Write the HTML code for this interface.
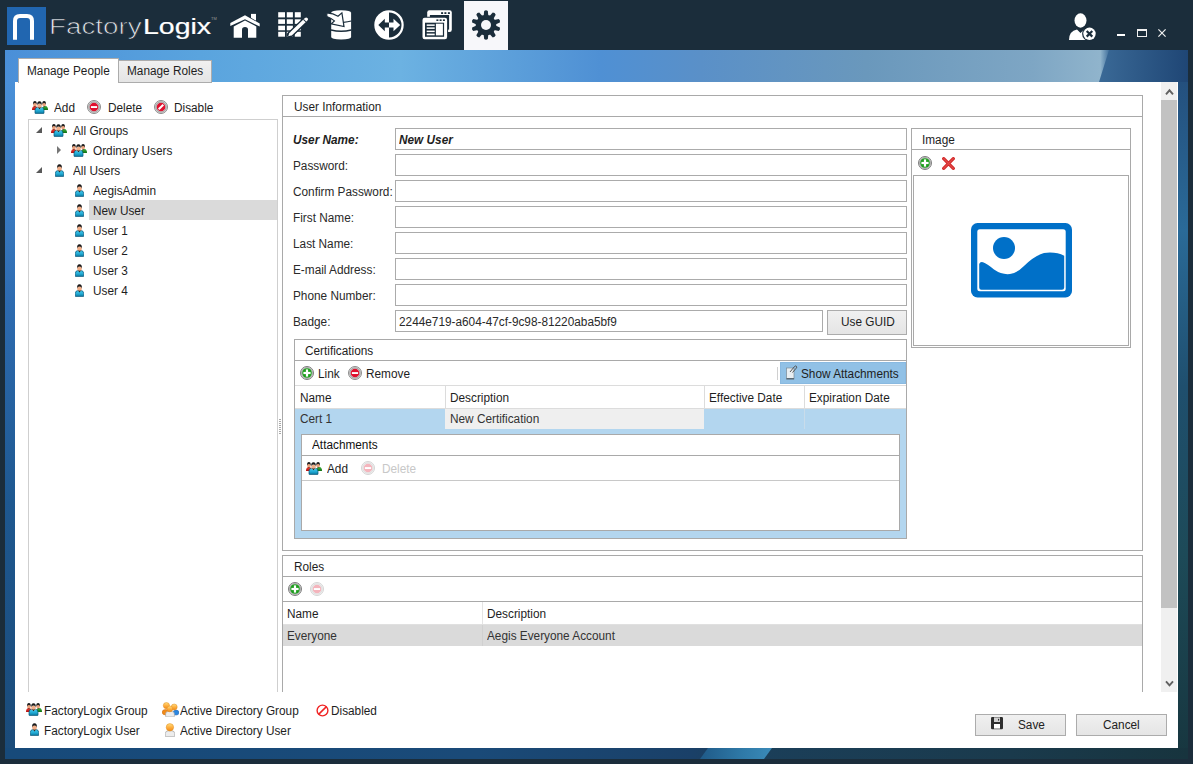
<!DOCTYPE html><html><head><meta charset="utf-8"><style>
*{margin:0;padding:0;box-sizing:border-box}
html,body{width:1193px;height:764px;overflow:hidden}
body{position:relative;background:#1b2d3b;font-family:"Liberation Sans",sans-serif;}
.a{position:absolute}
.t{position:absolute;font-size:12.3px;line-height:14px;white-space:nowrap;color:#1e1e1e;transform:scaleX(0.96);transform-origin:0 0}
.bi{font-weight:bold;font-style:italic}
</style></head><body>

<svg width="0" height="0" style="position:absolute"><defs>
<linearGradient id="gteal" x1="0" y1="0" x2="0" y2="1"><stop offset="0" stop-color="#48cdf2"/><stop offset=".6" stop-color="#1ea6d0"/><stop offset="1" stop-color="#0a6f95"/></linearGradient>
<linearGradient id="gred" x1="0" y1="0" x2="0" y2="1"><stop offset="0" stop-color="#f04030"/><stop offset="1" stop-color="#b01010"/></linearGradient>
<linearGradient id="ggreen" x1="0" y1="0" x2="0" y2="1"><stop offset="0" stop-color="#40b040"/><stop offset="1" stop-color="#107010"/></linearGradient>
<linearGradient id="gorange" x1="0" y1="0" x2="0" y2="1"><stop offset="0" stop-color="#ffe080"/><stop offset=".5" stop-color="#ffb040"/><stop offset="1" stop-color="#f08a18"/></linearGradient>
<symbol id="grp" viewBox="0 0 16 13">
 <path d="M0 9 Q0 5.3 2.5 5 H3.5 Q5.8 5.3 5.8 8 V9Z" fill="url(#gred)"/>
 <path d="M10.2 8 Q10.3 5.3 12.5 5 H13.5 Q16 5.3 16 9 H10.2Z" fill="url(#ggreen)"/>
 <ellipse cx="2.9" cy="3.5" rx="1.8" ry="2" fill="#eba27c"/>
 <path d="M1 3.4 Q0.9 0 2.9 0 Q4.9 0 4.8 3.4 Q4.4 1.8 2.9 1.9 Q1.4 1.8 1 3.4Z" fill="#1e1e1e"/>
 <ellipse cx="12.1" cy="3.5" rx="1.8" ry="2" fill="#eba27c"/>
 <path d="M10.2 3.4 Q10.1 0 12.1 0 Q14.1 0 14 3.4 Q13.6 1.8 12.1 1.9 Q10.6 1.8 10.2 3.4Z" fill="#1e1e1e"/>
 <path d="M2.2 5 L2.9 6 L3.6 5Z" fill="#222"/><path d="M11.4 5 L12.1 6 L12.8 5Z" fill="#222"/>
 <path d="M3 12 V9.2 Q3 6.5 5.5 6.2 H9.5 Q12 6.5 12 9.2 V12 Q12 12.6 11.3 12.6 H3.7 Q3 12.6 3 12Z" fill="url(#gteal)" stroke="#07587a" stroke-width=".7"/>
 <ellipse cx="7.5" cy="4.9" rx="2.2" ry="2.5" fill="#f0ae88"/>
 <path d="M5.2 4.6 Q4.9 0.3 7.5 0.3 Q10.1 0.3 9.8 4.6 Q9.4 2.4 7.5 2.5 Q5.6 2.4 5.2 4.6Z" fill="#1a1a1a"/>
 <path d="M6.1 6.2 L7.5 8.3 L8.9 6.2Z" fill="#151515"/><path d="M6.9 6.2 L7.5 7.3 L8.1 6.2Z" fill="#e9a880"/>
</symbol>
<symbol id="usr" viewBox="0 0 9 13">
 <path d="M0.3 12 V9.4 Q0.3 6.8 3 6.5 H6 Q8.7 6.8 8.7 9.4 V12 Q8.7 12.6 8 12.6 H1 Q0.3 12.6 0.3 12Z" fill="url(#gteal)" stroke="#07587a" stroke-width=".7"/>
 <ellipse cx="4.5" cy="4.6" rx="2.3" ry="2.7" fill="#f0ae88"/>
 <path d="M2.1 4.6 Q1.8 0.3 4.5 0.3 Q7.2 0.3 6.9 4.6 Q6.5 2.5 4.5 2.6 Q2.5 2.5 2.1 4.6Z" fill="#1a1a1a"/>
 <path d="M3.1 6.5 L4.5 8.6 L5.9 6.5Z" fill="#151515"/><path d="M3.9 6.5 L4.5 7.6 L5.1 6.5Z" fill="#e9a880"/>
</symbol>
<symbol id="del" viewBox="0 0 14 14">
 <circle cx="7" cy="7" r="6.5" fill="#dcdcdc" stroke="#8c8c8c" stroke-width="1"/>
 <circle cx="7" cy="7" r="5.1" fill="none" stroke="#9a9a9a" stroke-width=".9"/>
 <circle cx="7" cy="7" r="4.3" fill="#e0102e"/>
 <rect x="3.9" y="6.1" width="6.2" height="1.9" fill="#fff"/>
</symbol>
<symbol id="deld" viewBox="0 0 14 14">
 <circle cx="7" cy="7" r="6.5" fill="#f2f2f2" stroke="#d4d4d4" stroke-width="1"/>
 <circle cx="7" cy="7" r="5.1" fill="none" stroke="#dadada" stroke-width=".9"/>
 <circle cx="7" cy="7" r="4.3" fill="#f4b4bc"/>
 <rect x="3.9" y="6.1" width="6.2" height="1.9" fill="#fff"/>
</symbol>
<symbol id="dis" viewBox="0 0 14 14">
 <circle cx="7" cy="7" r="6.5" fill="#dcdcdc" stroke="#8c8c8c" stroke-width="1"/>
 <circle cx="7" cy="7" r="5.1" fill="none" stroke="#9a9a9a" stroke-width=".9"/>
 <circle cx="7" cy="7" r="4.3" fill="#e0102e"/>
 <path d="M4 8.6 L8.6 4 L10 5.4 L5.4 10Z" fill="#fff"/>
</symbol>
<symbol id="plus" viewBox="0 0 14 14">
 <circle cx="7" cy="7" r="6.5" fill="#e4e4e4" stroke="#7c7c7c" stroke-width="1"/>
 <circle cx="7" cy="7" r="5.4" fill="none" stroke="#8c8c8c" stroke-width=".7"/>
 <circle cx="7" cy="7" r="4.8" fill="#1c9e1c"/>
 <rect x="3.4" y="5.9" width="7.2" height="2.2" fill="#fff"/><rect x="5.9" y="3.4" width="2.2" height="7.2" fill="#fff"/>
</symbol>
<symbol id="redx" viewBox="0 0 13 13">
 <path d="M1.7 1.7 L11.3 11.3 M11.3 1.7 L1.7 11.3" stroke="#d42a2a" stroke-width="3.3" stroke-linecap="round"/>
 <path d="M1.7 1.7 L11.3 11.3 M11.3 1.7 L1.7 11.3" stroke="#ec6060" stroke-width="1.1" stroke-linecap="round" opacity=".6"/>
</symbol>
<symbol id="nodis" viewBox="0 0 13 13">
 <circle cx="6.5" cy="6.5" r="5.4" fill="none" stroke="#f02424" stroke-width="1.4"/>
 <path d="M2.6 10.4 L10.4 2.6" stroke="#f02424" stroke-width="1.5"/>
</symbol>
<symbol id="adgrp" viewBox="0 0 17 15">
 <ellipse cx="3.5" cy="10.2" rx="3.3" ry="2.7" fill="#f08a18" stroke="#c86a10" stroke-width=".5"/>
 <ellipse cx="14" cy="10.6" rx="2.9" ry="2.5" fill="#2a86e0" stroke="#1a60b0" stroke-width=".5"/>
 <circle cx="4.4" cy="3.6" r="3.1" fill="url(#gorange)" stroke="#e08a20" stroke-width=".5"/>
 <circle cx="12.2" cy="5" r="3" fill="url(#gorange)" stroke="#e08a20" stroke-width=".5"/>
 <path d="M3.6 14.2 V12 Q3.6 9.5 6.5 9.3 H9.5 Q12.4 9.5 12.4 12 V14.2 Q12.4 15 11.5 15 H4.5 Q3.6 15 3.6 14.2Z" fill="#ececec" stroke="#9a9a9a" stroke-width=".6"/>
 <circle cx="7.8" cy="6.9" r="2.9" fill="url(#gorange)" stroke="#e08a20" stroke-width=".5"/>
</symbol>
<symbol id="adusr" viewBox="0 0 10 14">
 <path d="M0.3 13 V10.5 Q0.3 8 3 7.8 H7 Q9.7 8 9.7 10.5 V13 Q9.7 13.7 9 13.7 H1 Q0.3 13.7 0.3 13Z" fill="#ececec" stroke="#9a9a9a" stroke-width=".6"/>
 <circle cx="4.9" cy="4.3" r="3.7" fill="url(#gorange)" stroke="#e08a20" stroke-width=".5"/>
</symbol>
<symbol id="save" viewBox="0 0 12 12.5">
 <rect x="0" y="0" width="12" height="12.4" rx="1.3" fill="#2e2e2e"/>
 <rect x="3" y="0.4" width="6" height="4.6" fill="#d0d0d0"/><ellipse cx="7.6" cy="2.8" rx=".6" ry="1" fill="#222"/>
 <rect x="3" y="7" width="6" height="4.6" fill="#fff"/>
</symbol>
<symbol id="attach" viewBox="0 0 12 16">
 <rect x="0.5" y="3" width="7.5" height="11" fill="#e8eef2" stroke="#7a8a96" stroke-width=".7"/>
 <rect x="0.5" y="13" width="7.5" height="1.4" fill="#5a6a76"/>
 <path d="M4 7 L8.5 1.5 Q9.5 0.5 10.4 1.3 Q11.2 2.1 10.3 3.1 L6.5 7.5" fill="none" stroke="#555" stroke-width="1"/>
</symbol>
</defs></svg>

<div class="a" style="left:5px;top:50px;width:1183px;height:709px;background:linear-gradient(90deg,#4a8fd8 0%,#5aa4de 16.5%,#6cb2e2 33.4%,#4f90d4 50.3%,#5a90c8 58.8%,#6a98bc 72.8%,#7ea6c4 86.9%,#90b4cc 92.6%,#3a6a98 93.4%,#1f4675 100%)"></div>
<div class="a" style="left:1090px;top:50px;width:98px;height:32px;clip-path:polygon(19px 0,98px 0,98px 32px,9px 32px);background:linear-gradient(90deg,#3d6d9a,#1f4675)"></div>
<div class="a" style="left:1178px;top:82px;width:10px;height:677px;background:linear-gradient(180deg,#24507e 0%,#2a6a98 22%,#1f4f6e 45%,#1d4a58 70%,#17363f 100%)"></div>
<div class="a" style="left:5px;top:82px;width:10px;height:677px;background:linear-gradient(180deg,#4a90d8 0%,#2d6bb0 33%,#1e5890 62%,#1a4a78 100%)"></div>
<div class="a" style="left:5px;top:748px;width:1183px;height:11px;background:linear-gradient(90deg,#174a7a 0%,#1a4a78 40%,#1a4068 58%,#1b3f5a 62%,#1a3a4c 85%,#17343e 100%)"></div>
<div class="a" style="left:700px;top:748px;width:72px;height:11px;clip-path:polygon(8px 0,72px 0,64px 11px,0 11px);background:linear-gradient(90deg,#1f5a88,#2f7aa8 60%,#3a8ab8)"></div>
<div class="a" style="left:7px;top:7px;width:39px;height:38px;background:#2166b0"></div>
<svg class="a" style="left:7px;top:7px" width="39" height="38"><path d="M8 32.8 V14 Q8 9 13 9 H20 Q25 9 25 14 V32.8" fill="none" stroke="#fff" stroke-width="4"/></svg>
<div class="a" style="left:48.6px;top:11.6px;font-size:22.5px;line-height:30px;color:#e0e4e8;white-space:nowrap;transform:scaleX(1.235);transform-origin:0 0;-webkit-text-stroke:0.7px #1b2d3b">Factory</div>
<div class="a" style="left:143px;top:11.6px;font-size:22.5px;line-height:30px;color:#fff;white-space:nowrap;transform:scaleX(1.266);transform-origin:0 0;-webkit-text-stroke:0.2px #fff">Logix</div>
<div class="a" style="left:211px;top:16px;font-size:4px;line-height:5px;color:#999">TM</div>
<svg class="a" style="left:229px;top:12px" width="32" height="28" viewBox="0 0 32 28">
<g fill="#fff">
<rect x="22" y="1.9" width="5" height="7"/>
<path d="M0.8 11.6 L16 3 L31.2 11.9 V14.9 L16 6.9 L0.8 14.6Z" fill="#1b2d3b" stroke="#1b2d3b" stroke-width="1.4"/>
<path d="M1.3 11.1 L16 3.2 L30.7 11.5 V14.5 L16 7.2 L1.3 14.1Z"/>
<path d="M4.7 14.4 L16 8.6 L27.3 14.4 V25.8 H4.7Z"/>
</g>
<path d="M13 25.9 V17.6 Q13 14.9 16 14.9 Q19 14.9 19 17.6 V25.9Z" fill="#1b2d3b"/>
</svg>
<svg class="a" style="left:277px;top:11px" width="32" height="28" viewBox="0 0 32 28">
<g fill="#fff">
<rect x="1.2" y="1.2" width="6.8" height="5.2"/><rect x="9.8" y="1.2" width="6.1" height="5.2"/><rect x="17.8" y="1.2" width="6" height="5.2"/>
<rect x="1.2" y="8.3" width="6.8" height="4.6"/><rect x="9.8" y="8.3" width="6.1" height="4.6"/><rect x="17.8" y="8.3" width="6" height="4.6"/>
<rect x="1.2" y="14.7" width="6.8" height="4.6"/><rect x="9.8" y="14.7" width="6.1" height="4.6"/><rect x="17.8" y="14.7" width="6" height="4.6"/>
<rect x="1.2" y="20.8" width="6.8" height="4.9"/><rect x="9.8" y="20.8" width="6.1" height="4.9"/><rect x="17.8" y="20.8" width="6" height="4.9"/>
</g>
<path d="M13 23.8 L29.3 8.2" stroke="#1b2d3b" stroke-width="6.4" stroke-linecap="round"/>
<path d="M14.6 22.3 L29.2 8.3" stroke="#fff" stroke-width="3.6" stroke-linecap="round"/>
<path d="M27.4 10 L28.1 9.3" stroke="#1b2d3b" stroke-width="3.8"/>
<path d="M11.3 25.3 L12.4 21.5 L15.2 24.2Z" fill="#fff"/>
</svg>
<svg class="a" style="left:322px;top:6px" width="36" height="38" viewBox="0 0 36 38">
<path d="M9.2 6.8 Q9.2 4.2 19.15 4.2 Q29.1 4.2 29.1 6.8 V31 Q29.1 33.4 19.15 33.4 Q9.2 33.4 9.2 31Z" fill="#fff"/>
<path d="M9 24 Q19 26.4 29.3 24" fill="none" stroke="#1b2d3b" stroke-width="1.4"/>
<path d="M21.3 16.3 Q26 16 29.3 15" fill="none" stroke="#1b2d3b" stroke-width="1.2"/>
<path d="M4.8 7.1 Q10 6.6 16 10.2 L19.9 6.8 L22 20.6 L9.2 17.9 L12.4 14.9 Q9.5 12.3 4.8 10.5Z" fill="#fff" stroke="#1b2d3b" stroke-width="1.2"/>
</svg>
<svg class="a" style="left:373px;top:9px" width="32" height="32" viewBox="0 0 32 32">
<circle cx="16" cy="16" r="13.6" fill="none" stroke="#fff" stroke-width="2.2"/>
<path d="M16 2.4 A13.6 13.6 0 0 0 16 29.6Z" fill="#fff"/>
<path d="M5.3 16 L11.8 9.8 V13.6 H16 V18.4 H11.8 V22.2Z" fill="#1b2d3b"/>
<path d="M27.2 16 L20.5 9.8 V13.6 H16 V18.4 H20.5 V22.2Z" fill="#fff"/>
</svg>
<svg class="a" style="left:421px;top:10px" width="32" height="30" viewBox="0 0 32 30">
<rect x="6.2" y="0.2" width="24.6" height="21.7" rx="2.2" fill="#fff"/>
<rect x="8.9" y="5" width="19.2" height="14.6" fill="#1b2d3b"/>
<rect x="20.1" y="2.2" width="2" height="1.8" fill="#1b2d3b"/><rect x="23.4" y="2.2" width="2" height="1.8" fill="#1b2d3b"/><rect x="26.9" y="2.2" width="2" height="1.8" fill="#1b2d3b"/>
<rect x="0.5" y="6.7" width="26.6" height="23.6" rx="2.6" fill="#1b2d3b"/>
<rect x="1.5" y="7.7" width="24.6" height="21.6" rx="2.2" fill="#fff"/>
<rect x="4" y="12.7" width="19.1" height="14.1" fill="#1b2d3b"/>
<rect x="15.4" y="9.4" width="2" height="1.6" fill="#1b2d3b"/><rect x="18.6" y="9.4" width="2" height="1.6" fill="#1b2d3b"/><rect x="21.9" y="9.4" width="2" height="1.6" fill="#1b2d3b"/>
<rect x="5.7" y="14.4" width="8" height="1.5" fill="#fff"/><rect x="5.7" y="17.4" width="8" height="1.5" fill="#fff"/><rect x="5.7" y="20.6" width="8" height="1.5" fill="#fff"/><rect x="5.7" y="23.6" width="8" height="1.7" fill="#fff"/>
<rect x="14.9" y="13.7" width="7" height="11.7" fill="#fff"/>
</svg>
<div class="a" style="left:464px;top:1px;width:44px;height:49px;background:#f7f7fa"></div>
<svg class="a" style="left:470px;top:9.2px" width="32" height="32" viewBox="-16 -16 32 32">
<g fill="#1b2d3b">
<circle r="10.3"/>
<path d="M-2.5 -8 L-1.8 -14 Q0 -15.3 1.8 -14 L2.5 -8Z" transform="rotate(0)"/><path d="M-2.5 -8 L-1.8 -14 Q0 -15.3 1.8 -14 L2.5 -8Z" transform="rotate(36)"/><path d="M-2.5 -8 L-1.8 -14 Q0 -15.3 1.8 -14 L2.5 -8Z" transform="rotate(72)"/><path d="M-2.5 -8 L-1.8 -14 Q0 -15.3 1.8 -14 L2.5 -8Z" transform="rotate(108)"/><path d="M-2.5 -8 L-1.8 -14 Q0 -15.3 1.8 -14 L2.5 -8Z" transform="rotate(144)"/><path d="M-2.5 -8 L-1.8 -14 Q0 -15.3 1.8 -14 L2.5 -8Z" transform="rotate(180)"/><path d="M-2.5 -8 L-1.8 -14 Q0 -15.3 1.8 -14 L2.5 -8Z" transform="rotate(216)"/><path d="M-2.5 -8 L-1.8 -14 Q0 -15.3 1.8 -14 L2.5 -8Z" transform="rotate(252)"/><path d="M-2.5 -8 L-1.8 -14 Q0 -15.3 1.8 -14 L2.5 -8Z" transform="rotate(288)"/><path d="M-2.5 -8 L-1.8 -14 Q0 -15.3 1.8 -14 L2.5 -8Z" transform="rotate(324)"/>
</g><circle r="5" fill="#f7f7fa"/></svg>
<svg class="a" style="left:1068.5px;top:12.8px" width="29" height="29" viewBox="0 0 29 29">
<ellipse cx="11.5" cy="7.5" rx="6" ry="7.2" fill="#fff"/>
<path d="M0 27 Q0 18 8 16.5 L11.5 20 L15 16.5 Q18 17 19 18 L20 27Z" fill="#fff"/>
<circle cx="20.5" cy="20.8" r="7.4" fill="#1b2d3b"/>
<circle cx="20.5" cy="20.8" r="6.2" fill="#fff"/>
<path d="M17.7 18 L23.3 23.6 M23.3 18 L17.7 23.6" stroke="#1b2d3b" stroke-width="2.2"/>
</svg>
<div class="a" style="left:1117px;top:34px;width:8px;height:2px;background:#fff"></div>
<div class="a" style="left:1137px;top:29px;width:10px;height:8px;border:1px solid #f0f0f0;border-top-width:2px"></div>
<svg class="a" style="left:1158.3px;top:28.8px" width="8" height="8"><path d="M0.4 0.4 L7.6 7.6 M7.6 0.4 L0.4 7.6" stroke="#f0f0f0" stroke-width="1.2"/></svg>
<div class="a" style="left:15px;top:82px;width:1163px;height:666px;background:#fff"></div>
<div class="a" style="left:118px;top:60px;width:94px;height:23px;background:linear-gradient(#f0f0f0,#e5e5e5);border:1px solid #acacac"></div>
<div class="a" style="left:18px;top:58px;width:101px;height:25px;background:#fff;border:1px solid #acacac;border-bottom:none"></div>
<div class="a" style="left:19px;top:82px;width:99px;height:3px;background:#fff"></div>
<div class="t" style="left:26.7px;top:63.8px;">Manage People</div>
<div class="t" style="left:126.7px;top:63.8px;">Manage Roles</div>
<svg class="a" style="left:32px;top:101px;" width="16" height="13"><use href="#grp"/></svg>
<div class="t" style="left:53.6px;top:100.8px;">Add</div>
<svg class="a" style="left:87px;top:100px;" width="14" height="14"><use href="#del"/></svg>
<div class="t" style="left:107.5px;top:100.8px;">Delete</div>
<svg class="a" style="left:154px;top:100px;" width="14" height="14"><use href="#dis"/></svg>
<div class="t" style="left:174.2px;top:100.8px;">Disable</div>
<div class="a" style="left:28px;top:119px;width:250px;height:574px;border:1px solid #cfcfcf;border-bottom:none"></div>
<div class="a" style="left:89px;top:200px;width:188px;height:20px;background:#dadada"></div>
<svg class="a" style="left:36px;top:127px" width="7" height="7"><path d="M6 0 V6 H0Z" fill="#595959"/></svg>
<svg class="a" style="left:57px;top:146px" width="5" height="8"><path d="M0 0 L4 4 L0 8Z" fill="#767676"/></svg>
<svg class="a" style="left:36px;top:167px" width="7" height="7"><path d="M6 0 V6 H0Z" fill="#595959"/></svg>
<svg class="a" style="left:51px;top:124px;" width="16" height="13"><use href="#grp"/></svg>
<div class="t" style="left:72.5px;top:123.8px;">All Groups</div>
<svg class="a" style="left:71px;top:144px;" width="16" height="13"><use href="#grp"/></svg>
<div class="t" style="left:92.5px;top:143.8px;">Ordinary Users</div>
<svg class="a" style="left:55px;top:164px;" width="9" height="13"><use href="#usr"/></svg>
<div class="t" style="left:72.5px;top:163.8px;">All Users</div>
<svg class="a" style="left:75px;top:184px;" width="9" height="13"><use href="#usr"/></svg>
<div class="t" style="left:92.5px;top:183.8px;">AegisAdmin</div>
<svg class="a" style="left:75px;top:204px;" width="9" height="13"><use href="#usr"/></svg>
<div class="t" style="left:92.5px;top:203.8px;">New User</div>
<svg class="a" style="left:75px;top:224px;" width="9" height="13"><use href="#usr"/></svg>
<div class="t" style="left:92.5px;top:223.8px;">User 1</div>
<svg class="a" style="left:75px;top:244px;" width="9" height="13"><use href="#usr"/></svg>
<div class="t" style="left:92.5px;top:243.8px;">User 2</div>
<svg class="a" style="left:75px;top:264px;" width="9" height="13"><use href="#usr"/></svg>
<div class="t" style="left:92.5px;top:263.8px;">User 3</div>
<svg class="a" style="left:75px;top:284px;" width="9" height="13"><use href="#usr"/></svg>
<div class="t" style="left:92.5px;top:283.8px;">User 4</div>
<div class="a" style="left:279px;top:419px;width:2px;height:16px;background:repeating-linear-gradient(180deg,#a8a8a8 0 1px,transparent 1px 2px)"></div>
<div class="a" style="left:282px;top:95px;width:861px;height:456px;border:1px solid #a9a9a9"></div>
<div class="a" style="left:283px;top:116px;width:859px;height:1px;background:#a9a9a9"></div>
<div class="t" style="left:293.7px;top:99.8px;">User Information</div>
<div class="t" style="left:293.2px;top:132.8px;font-weight:bold;font-style:italic">User Name:</div>
<div class="a" style="left:395px;top:128px;width:512px;height:22px;border:1px solid #ababab"></div>
<div class="t" style="left:293.2px;top:158.8px;color:#2a2a2a">Password:</div>
<div class="a" style="left:395px;top:154px;width:512px;height:22px;border:1px solid #ababab"></div>
<div class="t" style="left:293.2px;top:184.8px;color:#2a2a2a">Confirm Password:</div>
<div class="a" style="left:395px;top:180px;width:512px;height:22px;border:1px solid #ababab"></div>
<div class="t" style="left:293.2px;top:210.8px;color:#2a2a2a">First Name:</div>
<div class="a" style="left:395px;top:206px;width:512px;height:22px;border:1px solid #ababab"></div>
<div class="t" style="left:293.2px;top:236.8px;color:#2a2a2a">Last Name:</div>
<div class="a" style="left:395px;top:232px;width:512px;height:22px;border:1px solid #ababab"></div>
<div class="t" style="left:293.2px;top:262.8px;color:#2a2a2a">E-mail Address:</div>
<div class="a" style="left:395px;top:258px;width:512px;height:22px;border:1px solid #ababab"></div>
<div class="t" style="left:293.2px;top:288.8px;color:#2a2a2a">Phone Number:</div>
<div class="a" style="left:395px;top:284px;width:512px;height:22px;border:1px solid #ababab"></div>
<div class="t" style="left:293.2px;top:314.8px;color:#2a2a2a">Badge:</div>
<div class="a" style="left:395px;top:310px;width:428px;height:22px;border:1px solid #ababab"></div>
<div class="t" style="left:399.2px;top:132.8px;font-weight:bold;font-style:italic">New User</div>
<div class="t" style="left:399.2px;top:314.8px;color:#2a2a2a">2244e719-a604-47cf-9c98-81220aba5bf9</div>
<div class="a" style="left:827px;top:310px;width:80px;height:25px;border:1px solid #acacac;background:linear-gradient(#f0f0f0,#e5e5e5)"></div>
<div class="t" style="left:840.8px;top:314.8px;">Use GUID</div>
<div class="a" style="left:911px;top:128px;width:220px;height:220px;border:1px solid #a9a9a9"></div>
<div class="a" style="left:912px;top:149px;width:218px;height:1px;background:#a9a9a9"></div>
<div class="t" style="left:922.2px;top:132.8px;">Image</div>
<svg class="a" style="left:918px;top:156px;" width="14" height="14"><use href="#plus"/></svg>
<svg class="a" style="left:942px;top:156.5px;" width="13" height="13"><use href="#redx"/></svg>
<div class="a" style="left:913px;top:175px;width:216px;height:171px;border:1px solid #a9a9a9"></div>
<svg class="a" style="left:971px;top:223px" width="101" height="75" viewBox="0 0 101 75">
<rect x="0" y="0" width="101" height="74.5" rx="6.5" fill="#0070c8"/>
<rect x="6.3" y="6.3" width="88.4" height="62" rx="2.5" fill="#fff"/>
<path d="M8.2 41 Q9 38.5 12 39.2 Q16 40.5 23 46.5 Q31 52 39 51 Q46 50 53 43 Q63 33 73 30 Q85 28.5 93.2 32.8 V64.5 Q93.2 66.8 91 66.8 H10.4 Q8.2 66.8 8.2 64.5Z" fill="#0070c8"/>
<circle cx="33" cy="25" r="11" fill="#0070c8"/>
</svg>
<div class="a" style="left:294px;top:339px;width:613px;height:200px;border:1px solid #a9a9a9"></div>
<div class="a" style="left:295px;top:360px;width:611px;height:1px;background:#a9a9a9"></div>
<div class="t" style="left:305.2px;top:343.8px;">Certifications</div>
<svg class="a" style="left:300px;top:366px;" width="14" height="14"><use href="#plus"/></svg>
<div class="t" style="left:317.7px;top:366.8px;">Link</div>
<svg class="a" style="left:348px;top:366px;" width="14" height="14"><use href="#del"/></svg>
<div class="t" style="left:365.6px;top:366.8px;">Remove</div>
<div class="a" style="left:777px;top:367px;width:1px;height:13px;background:#d0d0d0"></div>
<div class="a" style="left:780px;top:362px;width:126px;height:22px;background:#91c1e6;border:1px solid #89b9e0"></div>
<svg class="a" style="left:786px;top:365px;" width="12" height="16"><use href="#attach"/></svg>
<div class="t" style="left:801.2px;top:366.8px;">Show Attachments</div>
<div class="a" style="left:295px;top:385px;width:611px;height:1px;background:#dcdcdc"></div>
<div class="a" style="left:445px;top:386px;width:1px;height:22px;background:#dcdcdc"></div>
<div class="a" style="left:704px;top:386px;width:1px;height:22px;background:#dcdcdc"></div>
<div class="a" style="left:804px;top:386px;width:1px;height:22px;background:#dcdcdc"></div>
<div class="a" style="left:295px;top:408px;width:611px;height:1px;background:#dcdcdc"></div>
<div class="t" style="left:299.7px;top:390.8px;">Name</div>
<div class="t" style="left:449.6px;top:390.8px;">Description</div>
<div class="t" style="left:708.6px;top:390.8px;">Effective Date</div>
<div class="t" style="left:808.7px;top:390.8px;">Expiration Date</div>
<div class="a" style="left:295px;top:409px;width:611px;height:129px;background:#b3d6ef"></div>
<div class="a" style="left:445px;top:409px;width:259px;height:20px;background:#efefef"></div>
<div class="a" style="left:804px;top:409px;width:1px;height:20px;background:#c9dcea"></div>
<div class="t" style="left:299.7px;top:411.8px;color:#333">Cert 1</div>
<div class="t" style="left:449.6px;top:411.8px;color:#333">New Certification</div>
<div class="a" style="left:301px;top:434px;width:599px;height:97px;border:1px solid #a9a9a9;background:#fff"></div>
<div class="a" style="left:302px;top:455px;width:597px;height:1px;background:#a9a9a9"></div>
<div class="a" style="left:302px;top:480px;width:597px;height:1px;background:#c8c8c8"></div>
<div class="t" style="left:312.0px;top:437.8px;color:#111">Attachments</div>
<svg class="a" style="left:306px;top:462px;" width="16" height="13"><use href="#grp"/></svg>
<div class="t" style="left:327.2px;top:461.8px;">Add</div>
<svg class="a" style="left:361px;top:461px;" width="14" height="14"><use href="#deld"/></svg>
<div class="t" style="left:381.8px;top:461.8px;color:#c8c8c8">Delete</div>
<div class="a" style="left:282px;top:555px;width:861px;height:140px;border:1px solid #a9a9a9"></div>
<div class="a" style="left:283px;top:576px;width:859px;height:1px;background:#a9a9a9"></div>
<div class="t" style="left:293.7px;top:559.8px;">Roles</div>
<svg class="a" style="left:288px;top:582px;" width="14" height="14"><use href="#plus"/></svg>
<svg class="a" style="left:310px;top:582px;" width="14" height="14"><use href="#deld"/></svg>
<div class="a" style="left:283px;top:601px;width:859px;height:1px;background:#a9a9a9"></div>
<div class="a" style="left:482px;top:602px;width:1px;height:44px;background:#e4e4e4"></div>
<div class="a" style="left:283px;top:624px;width:859px;height:1px;background:#e0e0e0"></div>
<div class="a" style="left:283px;top:625px;width:859px;height:21px;background:#dadada"></div>
<div class="a" style="left:482px;top:625px;width:1px;height:21px;background:#d0d0d0"></div>
<div class="t" style="left:286.5px;top:606.8px;">Name</div>
<div class="t" style="left:486.6px;top:606.8px;">Description</div>
<div class="t" style="left:286.5px;top:628.8px;color:#333">Everyone</div>
<div class="t" style="left:486.6px;top:628.8px;color:#333">Aegis Everyone Account</div>
<div class="a" style="left:16px;top:692px;width:1162px;height:56px;background:#fff"></div>
<div class="a" style="left:1161px;top:82px;width:16px;height:610px;background:#f0f0f0"></div>
<div class="a" style="left:1161px;top:100px;width:16px;height:508px;background:#c2c2c2"></div>
<svg class="a" style="left:1164px;top:86px" width="11" height="10"><path d="M2 8.3 L5.5 4.3 L9 8.3" fill="none" stroke="#606060" stroke-width="1.9"/></svg>
<svg class="a" style="left:1164px;top:678px" width="11" height="10"><path d="M2 3.3 L5.5 7.3 L9 3.3" fill="none" stroke="#606060" stroke-width="1.9"/></svg>
<svg class="a" style="left:26px;top:703px;" width="16" height="13"><use href="#grp"/></svg>
<div class="t" style="left:44.4px;top:703.8px;">FactoryLogix Group</div>
<svg class="a" style="left:161.5px;top:701.5px;" width="17" height="15"><use href="#adgrp"/></svg>
<div class="t" style="left:180.2px;top:703.8px;">Active Directory Group</div>
<svg class="a" style="left:315.5px;top:703.5px;" width="13" height="13"><use href="#nodis"/></svg>
<div class="t" style="left:330.5px;top:703.8px;">Disabled</div>
<svg class="a" style="left:30px;top:723px;" width="9" height="13"><use href="#usr"/></svg>
<div class="t" style="left:44.4px;top:723.8px;">FactoryLogix User</div>
<svg class="a" style="left:165px;top:723px;" width="10" height="14"><use href="#adusr"/></svg>
<div class="t" style="left:180.2px;top:723.8px;">Active Directory User</div>
<div class="a" style="left:975px;top:714px;width:91px;height:22px;border:1px solid #acacac;background:linear-gradient(#f0f0f0,#e5e5e5)"></div>
<svg class="a" style="left:991px;top:717.2px;" width="12" height="12.5"><use href="#save"/></svg>
<div class="t" style="left:1017.8px;top:717.8px;color:#222">Save</div>
<div class="a" style="left:1076px;top:714px;width:91px;height:22px;border:1px solid #acacac;background:linear-gradient(#f0f0f0,#e5e5e5)"></div>
<div class="t" style="left:1103.2px;top:717.8px;color:#222">Cancel</div>
</body></html>
